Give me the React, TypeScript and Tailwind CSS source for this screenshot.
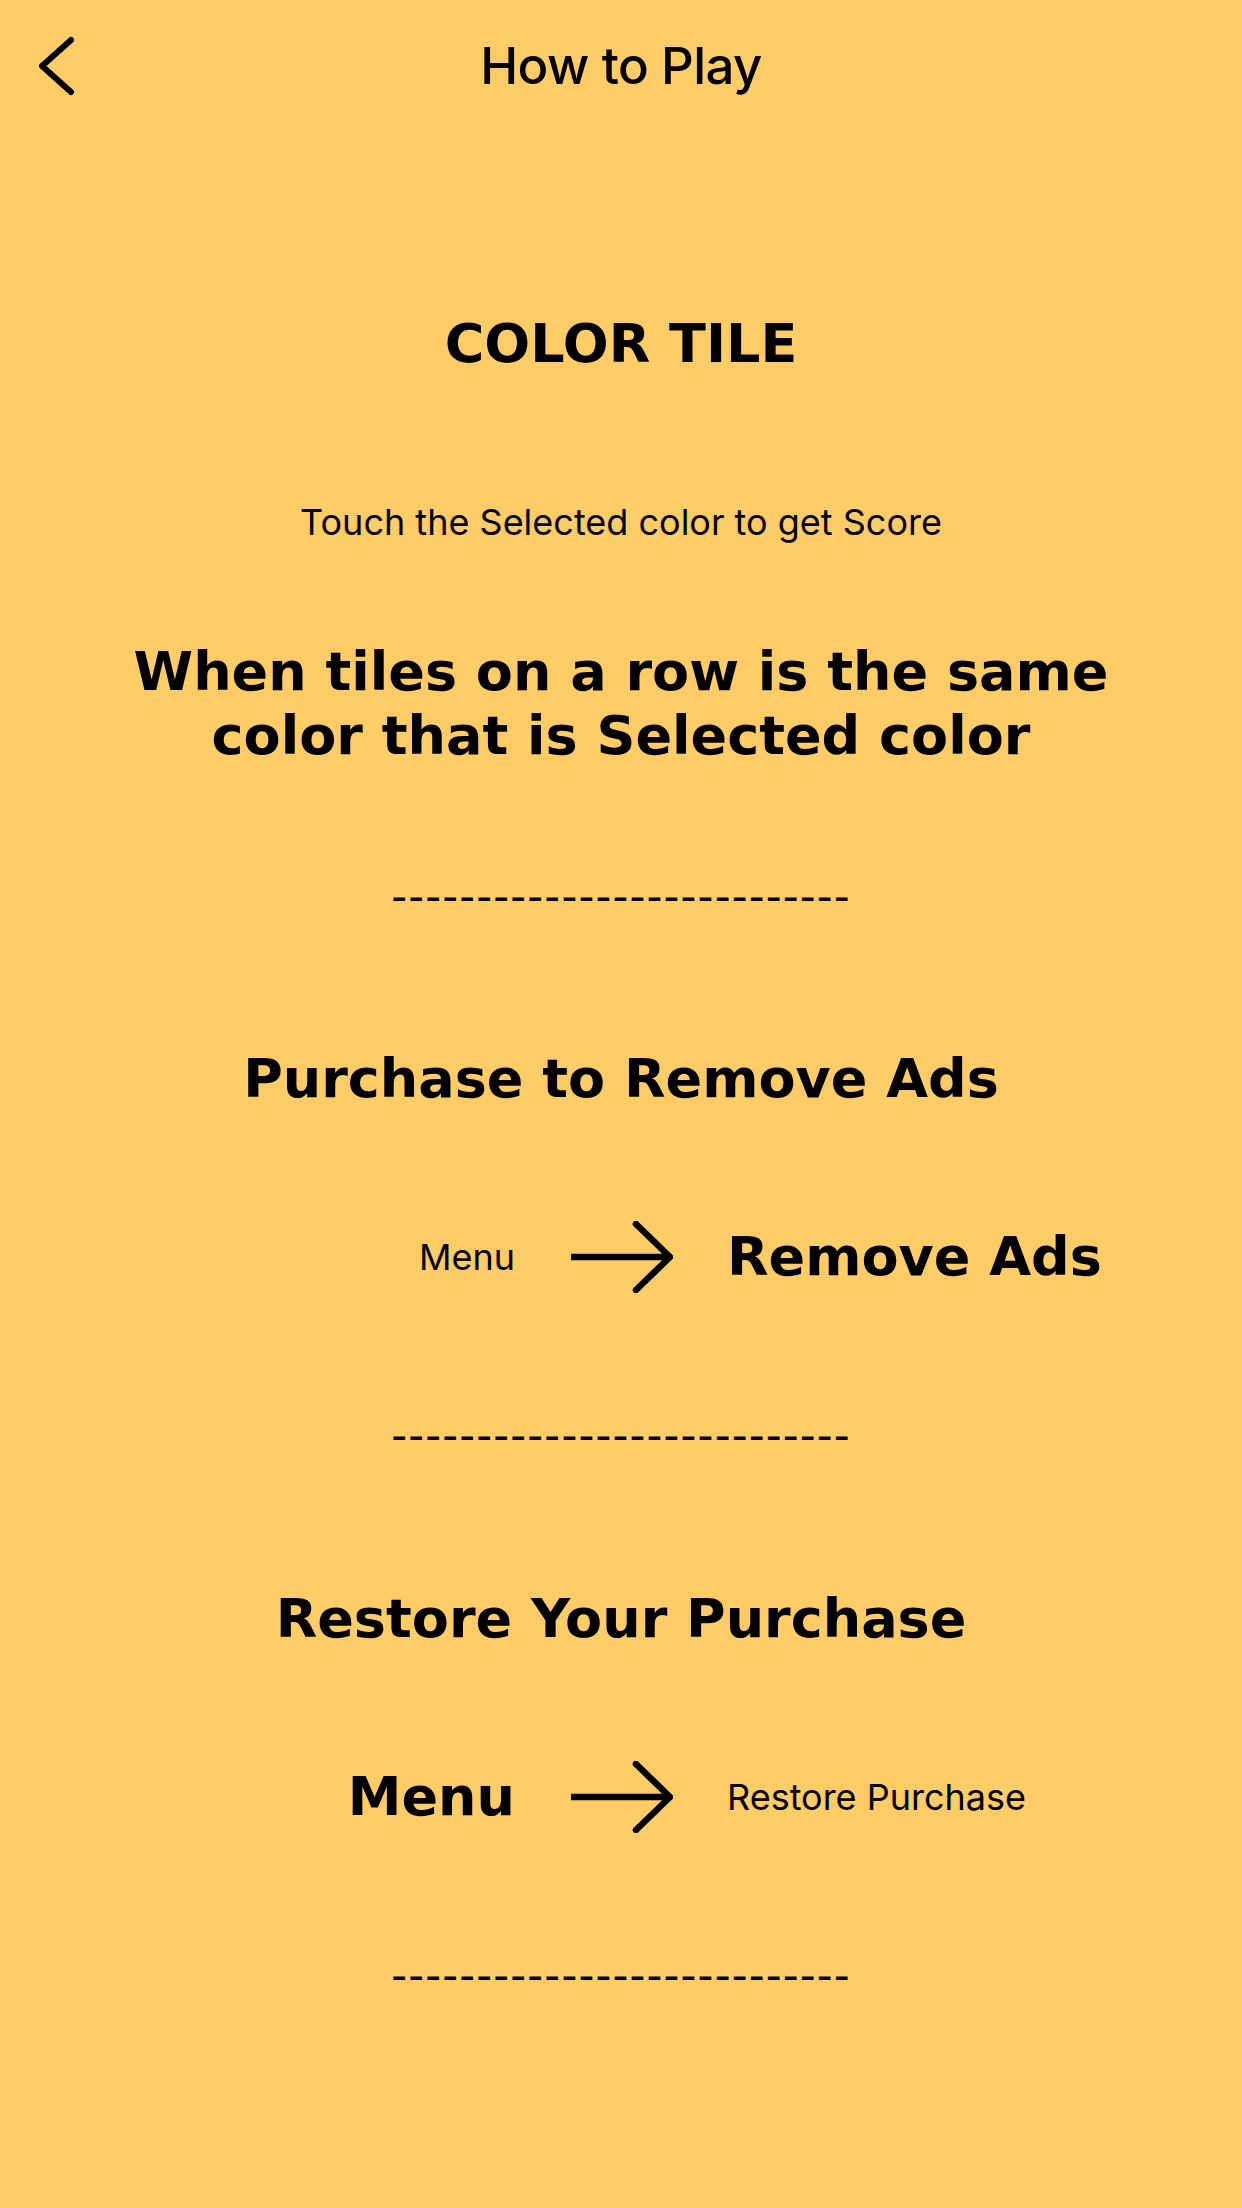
import React from "react";

const bold = "font-['DejaVu_Sans',Verdana,sans-serif] font-bold text-[54px] leading-[64px] text-black";
const body = "font-['Inter','Roboto',sans-serif] text-[36px] leading-[44px] text-black";

function Divider({ className }: { className: string }) {
  return (
    <div
      className={`text-center font-['DejaVu_Sans',sans-serif] text-[44px] leading-[52px] tracking-[1.15px] text-black whitespace-nowrap ${className}`}
    >
      ---------------------------
    </div>
  );
}

function Arrow() {
  return (
    <svg width="104" height="72" viewBox="0 0 104 72" fill="none" className="block">
      <path d="M2 36 H100" stroke="#000" strokeWidth="6.5" strokeLinecap="butt" />
      <path d="M67 3 L101 36 L67 69" stroke="#000" strokeWidth="6.5" strokeLinecap="round" strokeLinejoin="miter" />
    </svg>
  );
}

function StepRow({ left, right, className }: { left: React.ReactNode; right: React.ReactNode; className: string }) {
  return (
    <div className={`grid grid-cols-[1fr_auto_1fr] items-center gap-x-[54px] h-[72px] ${className}`}>
      <div className="flex justify-end">{left}</div>
      <Arrow />
      <div className="flex justify-start">{right}</div>
    </div>
  );
}

export default function App() {
  return (
    <div className="w-[1242px] min-h-[2208px] bg-[#ffcc66] flex flex-col">
      {/* navigation bar */}
      <header className="grid grid-cols-[1fr_auto_1fr] items-center h-[132px]">
        <div className="flex">
          <svg width="42" height="62" viewBox="0 0 42 62" fill="none" className="ml-[35px]">
            <path d="M36 5 L7 31 L36 57" stroke="#000" strokeWidth="6" strokeLinecap="round" strokeLinejoin="round" />
          </svg>
        </div>
        <h1 className="font-['Inter','Roboto',sans-serif] font-medium text-[51px] leading-[62px] tracking-[-0.6px] text-black">
          How to Play
        </h1>
        <div />
      </header>

      <main className="flex flex-col">
        <h2 className={`${bold} text-center mt-[180px]`}>COLOR TILE</h2>

        <p className={`${body} text-center mt-[124px]`}>Touch the Selected color to get Score</p>

        <p className={`${bold} text-center mt-[96px] w-[1080px] mx-auto`}>
          When tiles on a row is the same color that is Selected color
        </p>

        <Divider className="mt-[102px]" />

        <h2 className={`${bold} text-center mt-[125px]`}>Purchase to Remove Ads</h2>

        <StepRow
          className="mt-[110px]"
          left={<span className={body}>Menu</span>}
          right={<span className={bold}>Remove Ads</span>}
        />

        <Divider className="mt-[116px]" />

        <h2 className={`${bold} text-center mt-[126px]`}>Restore Your Purchase</h2>

        <StepRow
          className="mt-[110px]"
          left={<span className={bold}>Menu</span>}
          right={<span className={body}>Restore Purchase</span>}
        />

        <Divider className="mt-[116px]" />
      </main>
    </div>
  );
}
